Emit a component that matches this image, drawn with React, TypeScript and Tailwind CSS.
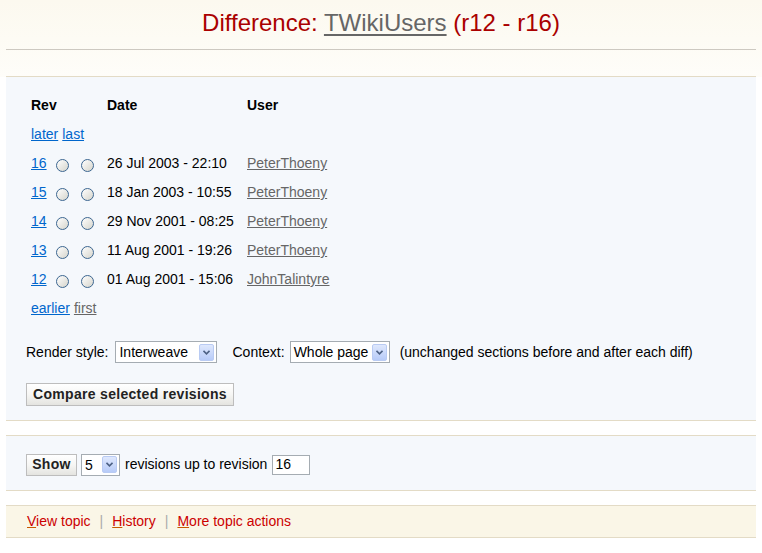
import React from 'react';

const revs = [
  { rev: '16', date: '26 Jul 2003 - 22:10', user: 'PeterThoeny' },
  { rev: '15', date: '18 Jan 2003 - 10:55', user: 'PeterThoeny' },
  { rev: '14', date: '29 Nov 2001 - 08:25', user: 'PeterThoeny' },
  { rev: '13', date: '11 Aug 2001 - 19:26', user: 'PeterThoeny' },
  { rev: '12', date: '01 Aug 2001 - 15:06', user: 'JohnTalintyre' },
];

function Radio() {
  return (
    <span className="mt-[6px] inline-block h-[13px] w-[13px] shrink-0 rounded-full border border-[#3c6690] bg-gradient-to-br from-white to-[#d6d5cc]" />
  );
}

function Chevron() {
  return (
    <span className="flex h-[17px] w-[15px] shrink-0 items-center justify-center rounded-[2px] border border-[#b9cbf3] bg-gradient-to-b from-[#dfe8fd] to-[#b7cbf8]">
      <svg width="7" height="5" viewBox="0 0 7 5">
        <path d="M0.5 0.8 L3.5 3.8 L6.5 0.8" fill="none" stroke="#4d6185" strokeWidth="1.6" />
      </svg>
    </span>
  );
}

function Select({ value, width }: { value: string; width: string }) {
  return (
    <span className={`flex h-[22px] items-center justify-between gap-[2px] border border-[#a5acb2] bg-white pl-[3px] pr-[2px] ${width}`}>
      <span className="whitespace-nowrap leading-none">{value}</span>
      <Chevron />
    </span>
  );
}

function Button({ label, className }: { label: string; className: string }) {
  return (
    <span className={`flex items-center justify-center border border-[#bdbdbd] bg-gradient-to-b from-white via-[#f6f6f4] to-[#e4e4e0] font-bold text-[#222] tracking-[0.3px] ${className}`}>
      {label}
    </span>
  );
}

function FooterLink({ first, rest }: { first: string; rest: string }) {
  return (
    <a className="text-[#c00]">
      <span className="underline decoration-[#c65a00]">{first}</span>
      {rest}
    </a>
  );
}

export default function App() {
  return (
    <div className="h-[553px] w-[762px] overflow-hidden bg-white font-['Liberation_Sans',Arial,sans-serif] text-[14px] text-black">
      <div className="bg-gradient-to-b from-[#fcf9ef] to-[#fefdf9]">
        <div className="mx-[6px] flex h-[50px] items-center justify-center border-b border-[#cdc9c1] pb-[4px] text-[24px] text-[#a00]">
          <span>
            Difference: <a className="text-[#666] underline decoration-[2px] underline-offset-[3px]">TWikiUsers</a> (r12 - r16)
          </span>
        </div>
        <div className="mx-[6px] h-[27px] border-b border-[#e3dbc6]" />
      </div>

      <div className="mx-[6px] border-b border-[#e3dbc6] bg-[#f5f8fc] pb-[14px] pl-[20px] pt-[14px]">
        <div className="ml-[5px]">
          <div className="flex h-[29px] items-center font-bold">
            <span className="w-[76px]">Rev</span>
            <span className="w-[140px]">Date</span>
            <span>User</span>
          </div>
          <div className="flex h-[29px] items-center gap-[4px] text-[#06c]">
            <a className="underline">later</a>
            <a className="underline">last</a>
          </div>
          {revs.map((r) => (
            <div key={r.rev} className="flex h-[29px] items-center">
              <span className="flex w-[76px] items-start">
                <a className="w-[16px] text-[#06c] underline">{r.rev}</a>
                <span className="ml-[9px] flex gap-[12px]">
                  <Radio />
                  <Radio />
                </span>
              </span>
              <span className="w-[140px]">{r.date}</span>
              <a className="text-[#666] underline">{r.user}</a>
            </div>
          ))}
          <div className="flex h-[29px] items-center gap-[4px]">
            <a className="text-[#06c] underline">earlier</a>
            <a className="text-[#666] underline">first</a>
          </div>
        </div>

        <div className="mt-[17px] flex h-[24px] items-center">
          <span>Render style:</span>
          <span className="ml-[7px]">
            <Select value="Interweave" width="w-[102px]" />
          </span>
          <span className="ml-[15px]">Context:</span>
          <span className="ml-[5px]">
            <Select value="Whole page" width="w-[100px]" />
          </span>
          <span className="ml-[10px]">(unchanged sections before and after each diff)</span>
        </div>

        <div className="mt-[19px] flex">
          <Button label="Compare selected revisions" className="h-[23px] w-[208px]" />
        </div>
      </div>

      <div className="mx-[6px] mt-[14px] flex h-[56px] items-center border-y border-[#e3dbc6] bg-[#f5f8fc] pl-[20px] pt-[3px]">
        <Button label="Show" className="h-[22px] w-[51px]" />
        <span className="ml-[4px]">
          <Select value="5" width="w-[39px]" />
        </span>
        <span className="ml-[5px]">revisions up to revision</span>
        <span className="ml-[5px] flex h-[20px] w-[38px] items-center border border-[#a5acb2] bg-white pl-[2px]">16</span>
      </div>

      <div className="mx-[6px] mt-[14px] flex h-[33px] items-center border-y border-[#e3dbc6] bg-[#faf6e7] pl-[21px]">
        <FooterLink first="V" rest="iew topic" />
        <span className="mx-[9px] text-[#aaa]">|</span>
        <FooterLink first="H" rest="istory" />
        <span className="mx-[9px] text-[#aaa]">|</span>
        <FooterLink first="M" rest="ore topic actions" />
      </div>
    </div>
  );
}
